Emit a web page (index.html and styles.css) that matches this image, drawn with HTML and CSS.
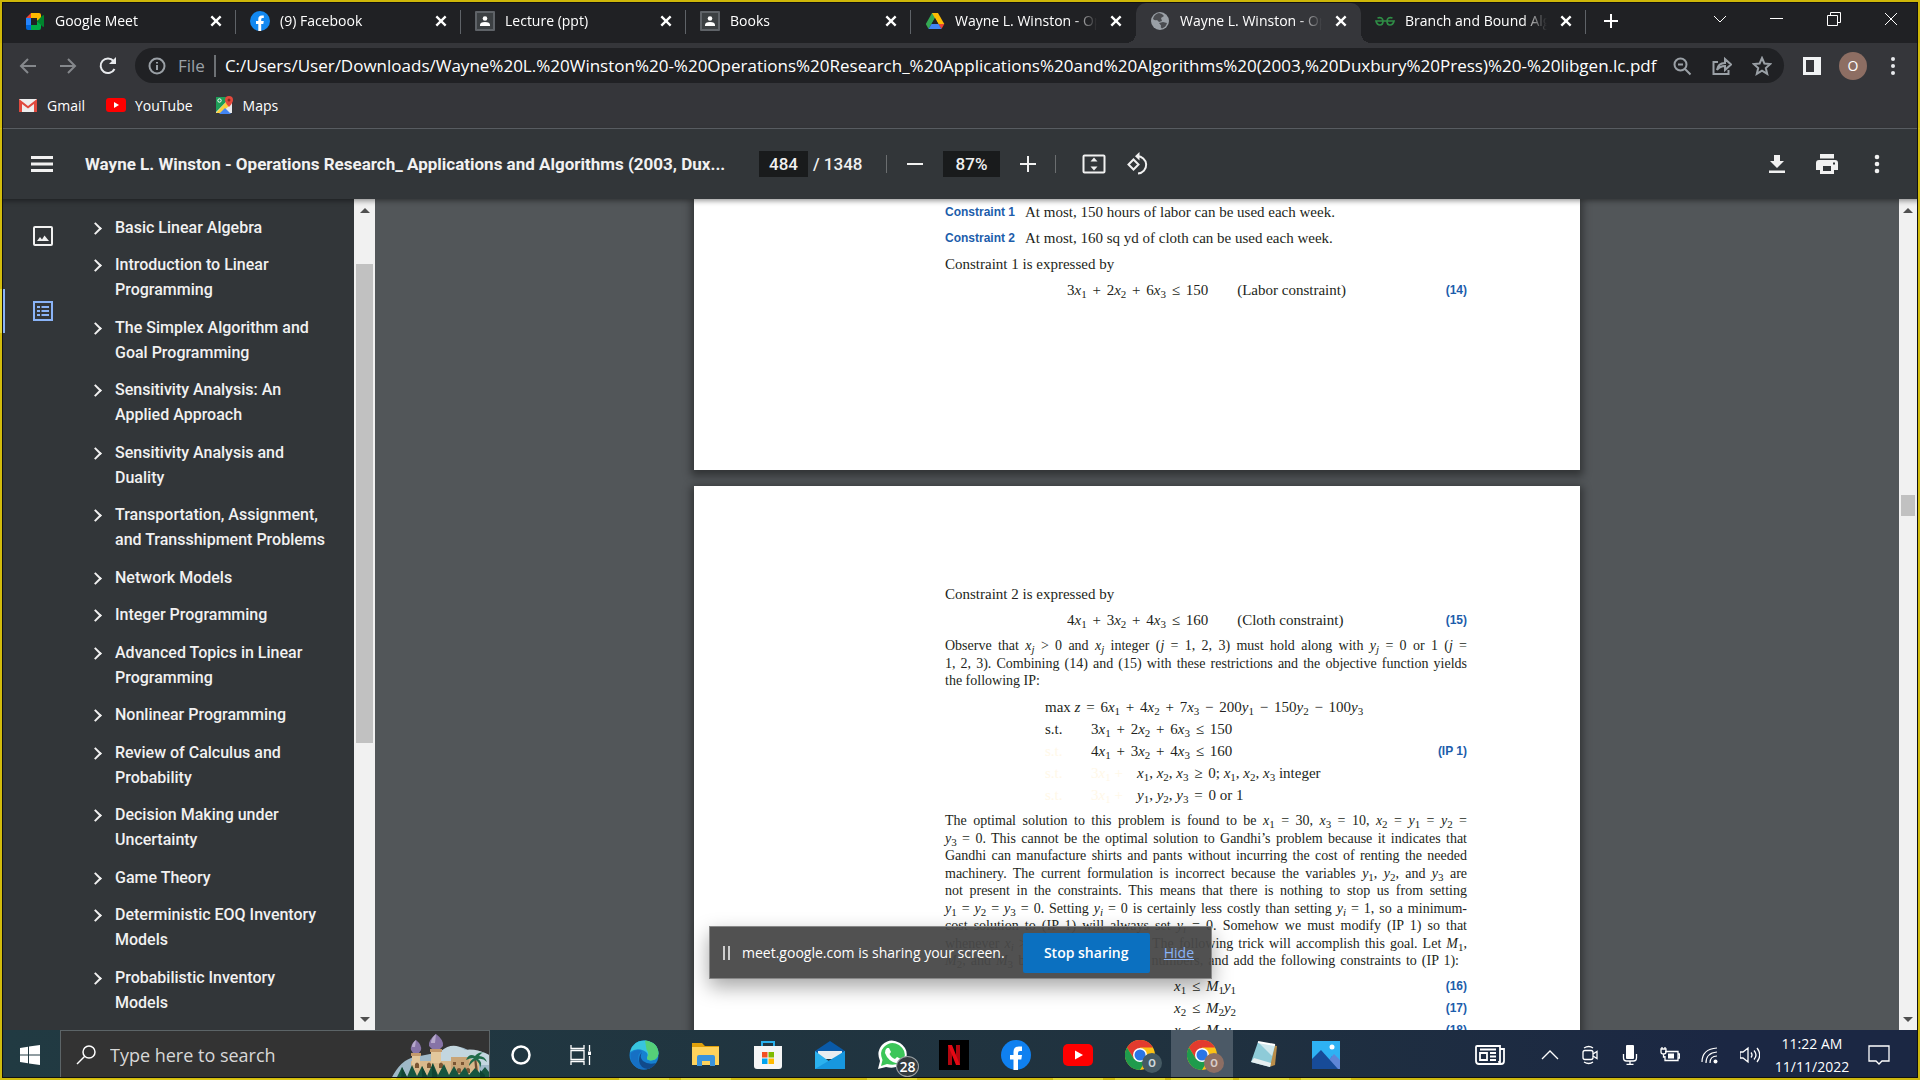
FILE: index.html
```html
<!DOCTYPE html>
<html lang="en">
<head>
<meta charset="utf-8">
<title>Wayne L. Winston - Operations Research</title>
<link rel="stylesheet" href="styles.css">
</head>
<body>
<div class="screen">

<header class="browser">
  <div class="tabstrip">
    <div class="tab">
      <svg class="favicon" viewBox="0 0 20 20"><path d="M1 7l5-5v5z" fill="#ea4335"/><path d="M1 7h5v7H1z" fill="#2684fc"/><path d="M1 14h5v5H3q-2 0-2-2z" fill="#0066da"/><path d="M6 2h8q2 0 2 2v4l-4 2V7H6z" fill="#ffba00"/><path d="M6 19h8q2 0 2-2v-4l-4-3v4H6z" fill="#00ac47"/><path d="M12 10l5-5q2-2 2 0v10q0 2-2 0z" fill="#00832d"/></svg>
      <span class="tab-title">Google Meet</span>
      <button class="tab-close" aria-label="Close tab"><svg viewBox="0 0 12 12"><path d="M2 2l8 8M10 2l-8 8"/></svg></button>
    </div>
    <div class="tab">
      <svg class="favicon" viewBox="0 0 20 20"><circle cx="10" cy="10" r="10" fill="#1288f0"/><path d="M8.300 20v-7H6v-3h2.300V8q0-3.600 3.600-3.600h1.900v2.700h-1.200q-1.400 0-1.400 1.300V10h2.600l-.5 3h-2.100v7z" fill="#fff"/></svg>
      <span class="tab-title">(9) Facebook</span>
      <button class="tab-close" aria-label="Close tab"><svg viewBox="0 0 12 12"><path d="M2 2l8 8M10 2l-8 8"/></svg></button>
    </div>
    <div class="tab">
      <svg class="favicon" viewBox="0 0 20 20"><rect width="20" height="20" rx="1" fill="#5f6368"/><rect x="2" y="2" width="16" height="16" fill="#3c4043"/><circle cx="10" cy="7.500" r="2.300" fill="#fff"/><path d="M5 14q0-3 5-3t5 3v1H5z" fill="#fff"/></svg>
      <span class="tab-title">Lecture (ppt)</span>
      <button class="tab-close" aria-label="Close tab"><svg viewBox="0 0 12 12"><path d="M2 2l8 8M10 2l-8 8"/></svg></button>
    </div>
    <div class="tab">
      <svg class="favicon" viewBox="0 0 20 20"><rect width="20" height="20" rx="1" fill="#5f6368"/><rect x="2" y="2" width="16" height="16" fill="#3c4043"/><circle cx="10" cy="7.500" r="2.300" fill="#fff"/><path d="M5 14q0-3 5-3t5 3v1H5z" fill="#fff"/></svg>
      <span class="tab-title">Books</span>
      <button class="tab-close" aria-label="Close tab"><svg viewBox="0 0 12 12"><path d="M2 2l8 8M10 2l-8 8"/></svg></button>
    </div>
    <div class="tab before-active">
      <svg class="favicon" viewBox="0 0 20 20"><path d="M7 2h6L6.500 13 3.500 18 .8 13z" fill="#34a853"/><path d="M7 2h6l6.300 11h-6z" fill="#fbbc04"/><path d="M13.300 13h6l-2.800 5z" fill="#ea4335"/><path d="M6.500 13h7l3 5h-13z" fill="#4285f4"/><path d="M10 7l3.400 6H6.600z" fill="#202124"/></svg>
      <span class="tab-title">Wayne L. Winston - Op</span>
      <button class="tab-close" aria-label="Close tab"><svg viewBox="0 0 12 12"><path d="M2 2l8 8M10 2l-8 8"/></svg></button>
    </div>
    <div class="tab active">
      <svg class="favicon" viewBox="0 0 20 20"><circle cx="10" cy="10" r="9" fill="#9aa0a6"/><path d="M9 2q-5 1-6 6 2 2 4 1l2 2 3-1-1-3 3-2-2-2zM9 12l4-1 4 1q-1 4-5 5.500-2-1-1-3z" fill="#4a4c50"/></svg>
      <span class="tab-title">Wayne L. Winston - Op</span>
      <button class="tab-close" aria-label="Close tab"><svg viewBox="0 0 12 12"><path d="M2 2l8 8M10 2l-8 8"/></svg></button>
    </div>
    <div class="tab">
      <svg class="favicon" viewBox="0 0 20 20"><g fill="none" stroke="#2f8d46" stroke-width="1.700"><path d="M2.500 7q5-1.500 5.500 3 0 4-3 4T1 10h18q-1 4-4 4t-3-4q.5-4.500 5.500-3"/></g></svg>
      <span class="tab-title">Branch and Bound Alg</span>
      <button class="tab-close" aria-label="Close tab"><svg viewBox="0 0 12 12"><path d="M2 2l8 8M10 2l-8 8"/></svg></button>
    </div>
    <button class="new-tab" aria-label="New tab"><svg viewBox="0 0 16 16"><path d="M8 1v14M1 8h14"/></svg></button>
    <div class="window-controls">
      <button aria-label="Search tabs"><svg viewBox="0 0 14 14"><path d="M1 4l6 6 6-6"/></svg></button>
      <button aria-label="Minimize"><svg viewBox="0 0 14 14"><path d="M0 6.500h13"/></svg></button>
      <button aria-label="Restore"><svg viewBox="0 0 14 14"><path d="M.5 3.500h10v10H.5zM3.500 3V.5h10v10H11"/></svg></button>
      <button aria-label="Close"><svg viewBox="0 0 14 14"><path d="M1 1l12 12M13 1L1 13"/></svg></button>
    </div>
  </div>

  <div class="toolbar">
    <div class="nav">
      <button class="dim" aria-label="Back"><svg viewBox="0 0 20 20"><path d="M18 10H3M10 3l-7 7 7 7"/></svg></button>
      <button class="dim" aria-label="Forward"><svg viewBox="0 0 20 20"><path d="M2 10h15M10 3l7 7-7 7"/></svg></button>
      <button aria-label="Reload"><svg viewBox="0 0 20 20"><path d="M16.500 13A7.300 7.300 0 1 1 15.500 5"/><path d="M18 1v7h-7z" fill="#e8eaed" stroke="none"/></svg></button>
    </div>
    <div class="omnibox">
      <svg class="ico20 grey" viewBox="0 0 20 20"><circle cx="10" cy="10" r="7.500"/><path d="M10 9v5M10 6v1.500"/></svg>
      <span class="scheme">File</span>
      <input class="url" aria-label="Address" value="C:/Users/User/Downloads/Wayne%20L.%20Winston%20-%20Operations%20Research_%20Applications%20and%20Algorithms%20(2003,%20Duxbury%20Press)%20-%20libgen.lc.pdf">
      <button aria-label="Zoom"><svg class="ico20 grey" viewBox="0 0 20 20"><circle cx="8.500" cy="8.500" r="6"/><path d="M13 13l5.500 5.500M6 8.500h5"/></svg></button>
      <button aria-label="Share"><svg class="ico20 grey" viewBox="0 0 20 20"><path d="M6 6H1.500v12h15v-4M5 14q1-7 8-7V3l6 5.500-6 5.500v-4q-5 0-8 4z"/></svg></button>
      <button aria-label="Bookmark"><svg class="ico20 grey" viewBox="0 0 20 20"><path d="M10 2l2.400 5.500 5.900.5-4.500 4 1.400 5.800L10 14.700l-5.200 3.100L6.200 12 1.700 8l5.900-.5z"/></svg></button>
    </div>
    <div class="actions">
      <button class="panel" aria-label="Side panel"><svg viewBox="0 0 20 20"><path d="M1 1h18v18H1z" fill="#f1f3f4"/><path d="M4 4h8v12H4z" fill="#35363a"/></svg></button>
      <button class="avatar">O</button>
      <button class="more" aria-label="Menu"><svg viewBox="0 0 20 20"><g fill="#e8eaed"><circle cx="10" cy="3" r="2"/><circle cx="10" cy="10" r="2"/><circle cx="10" cy="17" r="2"/></g></svg></button>
    </div>
  </div>

  <nav class="bookmarks">
    <a href="#"><svg viewBox="0 0 20 20"><path d="M1 4h18v13H1z" fill="#eee"/><path d="M1 17V4l9 7 9-7v13h-3V9l-6 4.500L4 9v8z" fill="#e04a3f"/></svg>Gmail</a>
    <a href="#"><svg viewBox="0 0 20 20"><rect y="3" width="20" height="14" rx="3" fill="#f00"/><path d="M8 7l5 3-5 3z" fill="#fff"/></svg>YouTube</a>
    <a href="#"><svg viewBox="0 0 20 20"><path d="M2 2h16v16H2z" fill="#e8eaed"/><path d="M2 2h10v5l-5 5-5 5z" fill="#1e9e57"/><path d="M2 18L12 7l3 4-8 7z" fill="#fbcf3b"/><path d="M5 19l6-6 6 6z" fill="#4285f4"/><path d="M15 1a4 4 0 0 1 4 4c0 3-4 7-4 7s-4-4-4-7a4 4 0 0 1 4-4z" fill="#e4493c"/><circle cx="15" cy="5" r="1.500" fill="#8e2a20"/><circle cx="5.500" cy="5.500" r="1.700" fill="none" stroke="#fff"/></svg>Maps</a>
  </nav>
</header>

<section class="pdfbar">
  <button class="menu" aria-label="Menu"><svg viewBox="0 0 22 16"><path d="M0 1.500h22M0 8h22M0 14.500h22"/></svg></button>
  <h1 class="doc-title">Wayne L. Winston - Operations Research_ Applications and Algorithms (2003, Dux...</h1>
  <input class="field page-no" aria-label="Page number" value="484">
  <span class="page-count">/ 1348</span>
  <span class="rule"></span>
  <button aria-label="Zoom out"><svg viewBox="0 0 24 24"><path d="M4 12h16"/></svg></button>
  <input class="field zoom" aria-label="Zoom level" value="87%">
  <button aria-label="Zoom in"><svg viewBox="0 0 24 24"><path d="M4 12h16M12 4v16"/></svg></button>
  <span class="rule"></span>
  <button class="fit" aria-label="Fit to page"><svg viewBox="0 0 24 24"><rect x="1.500" y="3.500" width="21" height="17" rx="1"/><path d="M12 5.500l3.500 4h-7zM12 18.500l3.500-4h-7z" fill="#f1f1f1" stroke="none"/></svg></button>
  <button class="rotate" aria-label="Rotate"><svg viewBox="0 0 24 24"><path d="M7.500 7.500l5 5-5 5-5-5zM11 4.200a8.600 8.600 0 1 1 1 17.300"/><path d="M13.500 0v8.500L9 4.200z" fill="#f1f1f1" stroke="none"/></svg></button>
  <div class="pdf-actions">
    <button aria-label="Download"><svg viewBox="0 0 24 24"><path d="M9 3h6v6h4l-7 7-7-7h4zM4 18.500h16v2.500H4z" fill="#f1f1f1" stroke="none"/></svg></button>
    <button aria-label="Print"><svg viewBox="0 0 24 24"><path d="M5 2h14v4.500H5zM4 8h16q3 0 3 3v7h-4v4H5v-4H1v-7q0-3 3-3zM8 14v5h8v-5zM18 10.500v2h2v-2z" fill="#f1f1f1" fill-rule="evenodd" stroke="none"/></svg></button>
    <button aria-label="More"><svg viewBox="0 0 24 24"><g fill="#f1f1f1" stroke="none"><circle cx="12" cy="5" r="2.300"/><circle cx="12" cy="12" r="2.300"/><circle cx="12" cy="19" r="2.300"/></g></svg></button>
  </div>
</section>

<main class="workspace">
  <aside class="sidebar">
    <div class="rail">
      <button aria-label="Thumbnails"><svg viewBox="0 0 20 20"><rect x="1" y="1" width="18" height="18" rx="1"/><path d="M4 15l3-4 2 2.500 2.500-4L16 15z" fill="#f1f1f1" stroke="none"/></svg></button>
      <button class="on" aria-label="Outline"><svg viewBox="0 0 20 20"><rect x="1" y="1" width="18" height="18"/><path d="M4 6h3M4 10h3M4 14h3M8.500 6H16M8.500 10H16M8.500 14H16"/></svg></button>
    </div>
    <ul class="outline">
      <li><a href="#">Basic Linear Algebra</a></li>
      <li><a href="#">Introduction to Linear<br>Programming</a></li>
      <li><a href="#">The Simplex Algorithm and<br>Goal Programming</a></li>
      <li><a href="#">Sensitivity Analysis: An<br>Applied Approach</a></li>
      <li><a href="#">Sensitivity Analysis and<br>Duality</a></li>
      <li><a href="#">Transportation, Assignment,<br>and Transshipment Problems</a></li>
      <li><a href="#">Network Models</a></li>
      <li><a href="#">Integer Programming</a></li>
      <li><a href="#">Advanced Topics in Linear<br>Programming</a></li>
      <li><a href="#">Nonlinear Programming</a></li>
      <li><a href="#">Review of Calculus and<br>Probability</a></li>
      <li><a href="#">Decision Making under<br>Uncertainty</a></li>
      <li><a href="#">Game Theory</a></li>
      <li><a href="#">Deterministic EOQ Inventory<br>Models</a></li>
      <li><a href="#">Probabilistic Inventory<br>Models</a></li>
    </ul>
    <div class="scrollbar side"><i class="up"></i><i class="thumb"></i><i class="down"></i></div>
  </aside>

  <div class="viewer">
    <article class="page first">
      <p class="eq"><b class="label">Constraint 1</b>At most, 150 hours of labor can be used each week.</p>
      <p class="eq"><b class="label">Constraint 2</b>At most, 160 sq yd of cloth can be used each week.</p>
      <p>Constraint 1 is expressed by</p>
      <p class="eq main-eq"><span>3<i>x</i><sub>1</sub> <span class="op">+</span> 2<i>x</i><sub>2</sub> <span class="op">+</span> 6<i>x</i><sub>3</sub> <span class="op">≤</span> 150</span><span>(Labor constraint)</span><b class="num">(14)</b></p>
    </article>
    <article class="page second">
      <p>Constraint 2 is expressed by</p>
      <p class="eq main-eq"><span>4<i>x</i><sub>1</sub> <span class="op">+</span> 3<i>x</i><sub>2</sub> <span class="op">+</span> 4<i>x</i><sub>3</sub> <span class="op">≤</span> 160</span><span>(Cloth constraint)</span><b class="num">(15)</b></p>
      <p class="para">
        <span>Observe that <i>x<sub>j</sub></i> &gt; 0 and <i>x<sub>j</sub></i> integer (<i>j</i> = 1, 2, 3) must hold along with <i>y<sub>j</sub></i> = 0 or 1 (<i>j</i> =</span>
        <span>1, 2, 3). Combining (14) and (15) with these restrictions and the objective function yields</span>
        <span class="last">the following IP:</span>
      </p>
      <div class="system">
        <p class="eq"><span>max <i>z</i> <span class="op">=</span> 6<i>x</i><sub>1</sub> <span class="op">+</span> 4<i>x</i><sub>2</sub> <span class="op">+</span> 7<i>x</i><sub>3</sub> <span class="op">−</span> 200<i>y</i><sub>1</sub> <span class="op">−</span> 150<i>y</i><sub>2</sub> <span class="op">−</span> 100<i>y</i><sub>3</sub></span></p>
        <p class="eq"><span class="st">s.t.</span><span>3<i>x</i><sub>1</sub> <span class="op">+</span> 2<i>x</i><sub>2</sub> <span class="op">+</span> 6<i>x</i><sub>3</sub> <span class="op">≤</span> 150</span></p>
        <p class="eq"><span class="st ghost">s.t.</span><span>4<i>x</i><sub>1</sub> <span class="op">+</span> 3<i>x</i><sub>2</sub> <span class="op">+</span> 4<i>x</i><sub>3</sub> <span class="op">≤</span> 160</span><b class="num">(IP 1)</b></p>
        <p class="eq"><span class="st ghost">s.t.</span><span class="lead ghost">3<i>x</i><sub>1</sub> +</span><span><i>x</i><sub>1</sub>, <i>x</i><sub>2</sub>, <i>x</i><sub>3</sub> <span class="op">≥</span> 0; <i>x</i><sub>1</sub>, <i>x</i><sub>2</sub>, <i>x</i><sub>3</sub> integer</span></p>
        <p class="eq"><span class="st ghost">s.t.</span><span class="lead ghost">3<i>x</i><sub>1</sub> +</span><span><i>y</i><sub>1</sub>, <i>y</i><sub>2</sub>, <i>y</i><sub>3</sub> <span class="op">=</span> 0 or 1</span></p>
      </div>
      <p class="para">
        <span>The optimal solution to this problem is found to be <i>x</i><sub>1</sub> = 30, <i>x</i><sub>3</sub> = 10, <i>x</i><sub>2</sub> = <i>y</i><sub>1</sub> = <i>y</i><sub>2</sub> =</span>
        <span><i>y</i><sub>3</sub> = 0. This cannot be the optimal solution to Gandhi’s problem because it indicates that</span>
        <span>Gandhi can manufacture shirts and pants without incurring the cost of renting the needed</span>
        <span>machinery. The current formulation is incorrect because the variables <i>y</i><sub>1</sub>, <i>y</i><sub>2</sub>, and <i>y</i><sub>3</sub> are</span>
        <span>not present in the constraints. This means that there is nothing to stop us from setting</span>
        <span><i>y</i><sub>1</sub> = <i>y</i><sub>2</sub> = <i>y</i><sub>3</sub> = 0. Setting <i>y<sub>i</sub></i> = 0 is certainly less costly than setting <i>y<sub>i</sub></i> = 1, so a minimum-</span>
        <span>cost solution to (IP 1) will always set <i>y<sub>i</sub></i> = 0. Somehow we must modify (IP 1) so that</span>
        <span>whenever <i>x<sub>i</sub></i> &gt; 0, <i>y<sub>i</sub></i> = 1 must hold. The following trick will accomplish this goal. Let <i>M</i><sub>1</sub>,</span>
        <span class="short"><i>M</i><sub>2</sub>, and <i>M</i><sub>3</sub> be three large positive numbers, and add the following constraints to (IP 1):</span>
      </p>
      <div class="bounds">
        <p class="eq"><span><i>x</i><sub>1</sub> <span class="op">≤</span> <i>M</i><sub>1</sub><i>y</i><sub>1</sub></span><b class="num">(16)</b></p>
        <p class="eq"><span><i>x</i><sub>2</sub> <span class="op">≤</span> <i>M</i><sub>2</sub><i>y</i><sub>2</sub></span><b class="num">(17)</b></p>
        <p class="eq"><span><i>x</i><sub>3</sub> <span class="op">≤</span> <i>M</i><sub>3</sub><i>y</i><sub>3</sub></span><b class="num">(18)</b></p>
      </div>
    </article>
  </div>
  <div class="scrollbar doc"><i class="up"></i><i class="thumb"></i><i class="down"></i></div>
</main>

<footer class="taskbar">
  <button class="start" aria-label="Start"><svg viewBox="0 0 20 20"><path d="M0 3l8-1.200V9.500H0zM9 1.600L20 0v9.500H9zM0 10.500h8v7.700L0 17zM9 10.500h11V20L9 18.400z" fill="#fff"/></svg></button>
  <label class="search">
    <svg class="glass" viewBox="0 0 20 20"><circle cx="13" cy="7" r="6"/><path d="M8.500 11.500L1 19"/></svg>
    <input type="text" aria-label="Search" placeholder="Type here to search">
    <svg class="castle" viewBox="0 0 98 46">
      <path d="M0 46q10-20 24-22l30-6q14-8 24 0 10-2 20 4v24z" fill="#9fb9c8"/>
      <path d="M50 18q12-10 24-1 10-2 24 5v10H50z" fill="#c3d6df"/>
      <path d="M20 28h40v-4h18l4 4h6v16H20z" fill="#d9b98c"/><path d="M60 24h18v18H60z" fill="#c9a577"/>
      <path d="M21 20h8v12h-8zM40 16h10v14H40z" fill="#e3c79c"/><path d="M20 20h10v3H20zM39 16h12v3H39z" fill="#c49a6c"/>
      <path d="M25 7q-6 5-5 10l2 3h6l2-3q1-5-5-10zM45 1q-8 6-7 12l3 3h8l3-3q1-6-7-12z" fill="#8673a6"/>
      <path d="M25 7q-4 3-4 7h3zM45 1q-5 4-5 9h4z" fill="#b7a9cc"/>
      <path d="M24 35v-4q2-3 4 0v4zM36 35v-4q2-3 4 0v4zM48 35v-4q2-3 4 0v4zM62 32v-3h3v3zM70 32v-3h3v3zM66 40v-4q2-2 4 0v4zM75 40v-4q2-2 4 0v4z" fill="#7a5634"/>
      <path d="M83 24l2 22h3l-3-22z" fill="#6b4b32"/>
      <path d="M84 23q-6-3-9 4 4-2 8-2-5 3-5 8 4-5 7-6 4 3 4 8 3-6-2-9 5-1 9 3-2-6-8-6 3-4 5-3-5-2-9 3z" fill="#1f6b4a"/>
      <path d="M5 46l6-12 5 10 5-12 5 11 5-10 5 10 6-13 5 12 6-11 5 11 5-9 5 9 6-8 4 8 6-7 5 5 5-6 4 5v8z" fill="#17553f"/>
      <path d="M11 34l5 10v2h-6zM41 30l5 12v4h-5zM31 33l5 10v3h-5zM89 37l5 5v4h-5z" fill="#0f4433"/>
    </svg>
  </label>
  <div class="apps">
    <button class="app" aria-label="Cortana"><svg viewBox="0 0 30 30"><circle cx="15" cy="15" r="8.500" fill="none" stroke="#fff" stroke-width="2.500"/></svg></button>
    <button class="app" aria-label="Task view"><svg viewBox="0 0 30 30"><path d="M4 5v3.500h13V5M4 25v-3.500h13V25M4 10.500h13v9H4zM22.500 5v6M22.500 16v9" fill="none" stroke="#fff" stroke-width="1.300"/><path d="M21 11.500h3v3.500h-3z" fill="#fff"/></svg></button>
    <button class="app run" aria-label="Edge"><svg viewBox="0 0 30 30"><circle cx="15" cy="15" r="14.500" fill="#1681d0"/><path d="M1 12Q4 0 16 .500q13 1.500 13.500 13-1 7-8 7-5-.5-3-4 1-4-4-6-7-3-13.500 1.500z" fill="#38c5df"/><path d="M16 .5q13 1.500 13.500 13-1 7-8 7-5-.5-3-4 2-3-1-7z" fill="#55cf78"/><path d="M13 11q-6 4-3 11 4 7 11 6-6 3-13 0-8-6-6-15 6-5 11-2z" fill="#1670c4"/><path d="M13 12q-3 5 1 9 5 4 13 2-3 5-8 6-8-1-9-8 0-6 3-9z" fill="#114a8b"/></svg></button>
    <button class="app run" aria-label="File Explorer"><svg viewBox="0 0 30 30"><path d="M1 3h10l3 3h14v6H1z" fill="#e0a00a"/><path d="M1 7h27v18H1z" fill="#ffd35c"/><path d="M6 26V17q0-2 2-2h14q2 0 2 2v9h-5v-5h-8v5z" fill="#3a93dc"/></svg></button>
    <button class="app" aria-label="Store"><svg viewBox="0 0 30 30"><path d="M9 8V2h12v6" fill="none" stroke="#29b0ec" stroke-width="2"/><path d="M1 6h28v20q0 3-3 3H4q-3 0-3-3z" fill="#f5f5f5"/><path d="M9 12h5.500v5.500H9z" fill="#f25022"/><path d="M15.500 12H21v5.500h-5.500z" fill="#7fba00"/><path d="M9 18.500h5.500V24H9z" fill="#00a4ef"/><path d="M15.500 18.500H21V24h-5.500z" fill="#ffb900"/></svg></button>
    <button class="app" aria-label="Mail"><svg viewBox="0 0 30 30"><path d="M0 11L15 1l15 10v5H0z" fill="#0a5aa8"/><path d="M3 11h24v8H3z" fill="#e9ecf0"/><path d="M0 11l15 11L30 11v18H0z" fill="#2bb1ee"/><path d="M0 29l30-18v18z" fill="#1797df"/></svg></button>
    <button class="app run" aria-label="WhatsApp, 28 unread"><svg viewBox="0 0 30 30"><path d="M1 29l2-8Q-1 12 5 5q8-8 18-2 9 6 6 16-6 11-20 8z" fill="#fff"/><path d="M4 26l1.500-6Q2 12 7 7q7-7 15-2 8 6 5 13-5 9-17 6z" fill="#3cc659"/><path d="M10 8l2 0 2 4-1.500 2q2 4 5.500 5l2-2 4 2q-1 4-5 4Q11 21 8 13q-.5-3 2-5z" fill="#fff"/></svg><span class="count">28</span></button>
    <button class="app" aria-label="Netflix"><svg viewBox="0 0 30 30"><path d="M0 0h30v30H0z" fill="#000"/><path d="M9 5h4v20H9zM17 5h4v20h-4z" fill="#b1060f"/><path d="M9 5h4l8 20h-4z" fill="#e50914"/></svg></button>
    <button class="app" aria-label="Facebook"><svg viewBox="0 0 30 30"><circle cx="15" cy="15" r="15" fill="#0f80f0"/><path d="M12.500 30V19.500H9V15h3.500v-3q0-5.500 5.500-5.500h3V11h-2q-2 0-2 2v2h4l-.7 4.500H17V30z" fill="#fff"/></svg></button>
    <button class="app run" aria-label="YouTube"><svg viewBox="0 0 30 30"><rect y="4" width="30" height="22" rx="5" fill="#f00"/><path d="M12 10.500l8 4.500-8 4.500z" fill="#fff"/></svg></button>
    <button class="app run" aria-label="Chrome"><svg viewBox="0 0 30 30"><circle cx="15" cy="15" r="15" fill="#fbc116"/><path d="M2 7.500A15 15 0 0 1 28 7.500H15L9 19z" fill="#e33b2e"/><path d="M2 7.500A15 15 0 0 0 15 30l6.500-11L9 19z" fill="#1f9b4c"/><circle cx="15" cy="15" r="7" fill="#fff"/><circle cx="15" cy="15" r="5.500" fill="#2a75e6"/></svg><span class="profile slate">O</span></button>
    <button class="app run current" aria-label="Chrome"><svg viewBox="0 0 30 30"><circle cx="15" cy="15" r="15" fill="#fbc116"/><path d="M2 7.500A15 15 0 0 1 28 7.500H15L9 19z" fill="#e33b2e"/><path d="M2 7.500A15 15 0 0 0 15 30l6.500-11L9 19z" fill="#1f9b4c"/><circle cx="15" cy="15" r="7" fill="#fff"/><circle cx="15" cy="15" r="5.500" fill="#2a75e6"/></svg><span class="profile">O</span></button>
    <button class="app run" aria-label="Notepad"><svg viewBox="0 0 30 30"><path d="M11 3l17 3-2 19-6 2z" fill="#b98d4a"/><path d="M9 2l17 3-5 22L2 22z" fill="#8ecbd8"/><path d="M9 2l17 3-3 11z" fill="#cfe8ee"/><path d="M2 22l19 5 1-4-17-5z" fill="#e6eef0"/><path d="M9 2l17 3" stroke="#fff" stroke-width="2"/></svg></button>
    <button class="app run" aria-label="Photos"><svg viewBox="0 0 30 30"><path d="M1 1h28v28H1z" fill="#2eb2f4"/><path d="M12 29l9-13 8 8v5z" fill="#2b73d3"/><path d="M18 20l5-6 6 6v9H18z" fill="#5f86d8"/><path d="M1 19L10 10l17 19H1z" fill="#174b98"/><circle cx="21" cy="7" r="2.500" fill="#fff"/></svg></button>
  </div>
  <div class="tray">
    <svg class="news" viewBox="0 0 30 20"><path d="M2 1h23v18H4q-3 0-3-3V2q0-1 1-1zM25 4h4v12q0 3-3 3-2 0-2-3M5 8h7v7H5zM5 4.500h16M15 8h6M15 11.500h6M15 15h6" stroke-width="1.800"/></svg>
    <svg class="caret" viewBox="0 0 20 20"><path d="M2 14l8-8 8 8"/></svg>
    <svg viewBox="0 0 20 20"><rect x="3" y="5.500" width="10" height="9" rx="2"/><path d="M13 9l4-2.500v7L13 11M4 3q5-3 9 0M4 17q5 3 9 0"/></svg>
    <svg viewBox="0 0 20 20"><rect x="6" y="0" width="8" height="14" rx="1" fill="#fff" stroke="none"/><path d="M3.500 9v4q0 3 3 3h7q3 0 3-3V9M10 16v3M6.500 19.300h7"/></svg>
    <svg viewBox="0 0 20 20"><path d="M5 6.500h13v9H5V11M18 9h1.500v4H18M1 4h5v3q0 2-2.500 2T1 7zM2 4V2M5 4V2M3.500 9v3H5"/><path d="M8 8.500h6v5H8z" fill="#fff" stroke="none"/></svg>
    <svg viewBox="0 0 20 20"><g stroke-width="1.200"><path d="M2 17Q2 4 17 3M6 18Q6 8 17 7M10 18q0-7 7-7"/></g><circle cx="15.500" cy="16.500" r="2" fill="#fff" stroke="none"/></svg>
    <svg viewBox="0 0 20 20"><path d="M0 7h3l5-4v14l-5-4H0zM11 7.500q2 2.500 0 5M14 5.500q4 4.500 0 9M17 3q5.500 7 0 14"/></svg>
    <div class="clock"><time>11:22 AM</time><time>11/11/2022</time></div>
    <svg class="note" viewBox="0 0 22 22"><path d="M1 2h20v15h-7l-3 3-3-3H1z"/></svg>
  </div>
</footer>

<div class="share-bar" role="dialog" aria-label="Screen sharing">
  <i class="grip"></i>
  <span>meet.google.com is sharing your screen.</span>
  <button class="stop">Stop sharing</button>
  <a href="#">Hide</a>
</div>
<div class="capture-frame"></div>
</div>
</body>
</html>
```
FILE: styles.css
```css
* { box-sizing: border-box; }
body { margin: 0; font-family: "Open Sans", "Noto Sans", sans-serif; font-size: 14px; color: #fff; background: #202124; }
button { display: flex; align-items: center; justify-content: center; flex: none; padding: 0; border: 0; background: none; color: inherit; font: inherit; }
input { border: 0; padding: 0; color: inherit; font: inherit; min-width: 0; }
a { color: inherit; text-decoration: none; }
p { margin: 0; }
svg { display: block; }

.screen { position: relative; display: flex; flex-direction: column; height: 100vh; overflow: hidden; }
.capture-frame { position: absolute; inset: 0; z-index: 10; border: 2px solid rgba(255, 226, 0, .78); box-shadow: inset 0 0 0 1px #111; pointer-events: none; }

/* browser chrome */
.browser { flex: none; background: #35363a; border-bottom: 1px solid #5f6368; }
.tabstrip { display: flex; height: 43px; padding: 3px 1px 0 11px; background: #202124; }
.tab { position: relative; display: flex; align-items: center; flex: 0 1 225px; min-width: 0; padding: 0 13px 4px 14px; }
.tab::after { content: ""; position: absolute; right: 0; top: 7px; height: 24px; width: 1px; background: #5f6368; }
.tab.before-active::after { display: none; }
.favicon { width: 20px; height: 20px; flex: none; }
.tab-title { flex: 1; min-width: 0; margin-left: 10px; overflow: hidden; white-space: nowrap; line-height: 20px; -webkit-mask-image: linear-gradient(90deg, #000 118px, transparent 142px); mask-image: linear-gradient(90deg, #000 118px, transparent 142px); }
.tab-close { width: 14px; height: 14px; margin-left: 8px; }
.tab-close svg { width: 14px; height: 14px; fill: none; stroke: #fff; stroke-width: 2; }
.tab.active { background: #35363a; border-radius: 10px 10px 0 0; }
.tab.active::before, .tab.active::after { content: ""; position: absolute; top: auto; bottom: 0; width: 10px; height: 10px; }
.tab.active::before { left: -10px; background: radial-gradient(circle at 0 0, #202124 10px, #35363a 10px); }
.tab.active::after { right: -10px; background: radial-gradient(circle at 100% 0, #202124 10px, #35363a 10px); }
.new-tab { width: 50px; height: 36px; }
.new-tab svg { width: 16px; height: 16px; fill: none; stroke: #fff; stroke-width: 2; }
.window-controls { display: flex; margin-left: auto; }
.window-controls button { width: 57px; height: 32px; }
.window-controls svg { width: 14px; height: 14px; fill: none; stroke: #fff; stroke-width: 1; }

.toolbar { display: flex; align-items: center; height: 45px; padding: 0 9px 0 8px; }
.nav { display: flex; }
.nav button { width: 40px; height: 40px; }
.nav svg { width: 20px; height: 20px; fill: none; stroke: #e8eaed; stroke-width: 2; }
.nav .dim svg { stroke: #85888c; }
.omnibox { display: flex; align-items: center; flex: 1; min-width: 0; height: 35px; margin-left: 7px; padding: 0 12px; border-radius: 18px; background: #202124; font-size: 17px; }
.ico20 { width: 20px; height: 20px; fill: none; stroke: #9aa0a6; stroke-width: 2; }
.scheme { margin: 0 9px 0 11px; padding-right: 9px; border-right: 2px solid #6d7175; color: #9aa0a6; line-height: 22px; }
.url { flex: 1; background: none; outline: 0; }
.omnibox button { width: 40px; height: 34px; }
.omnibox button:nth-of-type(1) { width: 30px; padding-right: 0; margin-right: 5px; }
.omnibox button:last-child { width: 20px; margin-left: 10px; }
.actions { display: flex; align-items: center; }
.actions svg { width: 20px; height: 20px; }
.actions .panel { width: 20px; height: 34px; margin: 0 17px 0 18px; }
.actions .avatar { width: 28px; height: 28px; border-radius: 50%; background: #8d6e63; }
.actions .more { width: 20px; height: 34px; margin: 0 8px 0 16px; }
.bookmarks { display: flex; align-items: center; gap: 21px; height: 40px; padding: 0 18px 6px; }
.bookmarks a { display: flex; align-items: center; gap: 9px; }
.bookmarks svg { width: 20px; height: 20px; }

/* pdf toolbar */
.pdfbar { position: relative; z-index: 2; display: flex; align-items: center; flex: none; height: 70px; padding: 0 31px; background: #323639; font-family: Roboto, sans-serif; font-size: 17px; font-weight: 500; color: #f1f1f1; box-shadow: 0 2px 5px rgba(0, 0, 0, .4); }
.pdfbar svg { width: 24px; height: 24px; fill: none; stroke: #f1f1f1; stroke-width: 2; }
.pdfbar .menu svg { width: 22px; height: 16px; stroke-width: 3; }
.doc-title { flex: 0 0 648px; margin: 0 26px 0 32px; font-size: 17px; font-weight: 700; white-space: nowrap; }
.field { height: 26px; background: #191b1c; text-align: center; }
.page-no { width: 49px; }
.page-count { width: 48px; margin: 0 25px 0 5px; white-space: nowrap; }
.zoom { width: 57px; margin: 0 16px; }
.rule { width: 1px; height: 18px; background: #6b6e70; }
.pdfbar .rule + button { margin-left: 16px; }
.pdfbar .rule + .fit { margin-left: 26px; }
.zoom + button { margin-right: 15px; }
.rotate { margin-left: 20px; }
.pdf-actions { display: flex; gap: 26px; margin-left: auto; }

/* workspace */
.workspace { display: flex; flex: 1; min-height: 0; background: #525659; }
.sidebar { display: flex; flex: none; width: 375px; background: #323639; overflow: hidden; }
.rail { flex: none; width: 85px; padding-top: 12px; }
.rail button { width: 85px; height: 50px; margin-bottom: 28px; }
.rail svg { width: 20px; height: 20px; fill: none; stroke: #f1f1f1; stroke-width: 2; }
.rail .on { height: 44px; border-left: 5px solid #8ab4f8; padding-right: 5px; }
.rail .on svg { stroke: #8ab4f8; }
.outline { flex: 1; margin: 0; padding: 16px 0 0; list-style: none; font: 500 16px/25px Roboto, sans-serif; color: #f1f1f1; white-space: nowrap; }
.outline li { display: flex; margin-bottom: 12px; }
.outline li:nth-child(even) { margin-bottom: 13px; }
.outline li::before { content: ""; flex: none; width: 7px; height: 7px; margin: 9px 15px 0 6px; border: solid #f1f1f1; border-width: 2px 2px 0 0; transform: rotate(45deg); }
.scrollbar { position: relative; display: flex; flex-direction: column; flex: none; width: 21px; padding: 9px 2px 8px; background: #f1f1f1; }
.scrollbar.doc { border-right: 3px solid #323639; }
.scrollbar .thumb { background: #c1c1c1; }
.side .thumb { flex: 0 1 479px; margin: 51px 0 auto; }
.doc .thumb { flex: 0 1 21px; margin: 282px 0 auto; }
.up, .down { flex: none; align-self: center; border: 5px solid transparent; }
.up { border-top: 0; border-bottom-color: #505050; }
.down { border-bottom: 0; border-top-color: #505050; }

/* document */
.viewer { flex: 1; min-width: 0; overflow: hidden; }
.page { display: flex; flex-direction: column; gap: 8px; max-width: 886px; margin: 0 auto 16px; padding: 4px 113px 0 251px; background: #fff; color: #231f20; font: 15px/18px "Liberation Serif", serif; white-space: nowrap; box-shadow: 0 3px 8px 3px rgba(0, 0, 0, .4); }
.page.first { padding-bottom: 171px; }
.page.second { padding-top: 99px; padding-bottom: 60px; margin-bottom: 0; }
.page sub { font-size: 11px; font-style: normal; line-height: 0; vertical-align: -3px; }
.page i sub { font-style: italic; }
.label, .num { color: #1c5dab; font-family: "Liberation Sans Narrow", "Liberation Sans", sans-serif; font-size: 12px; }
.label { flex: none; width: 80px; }
.eq { display: flex; }
.op { margin: 0 2px; }
.num { margin-left: auto; }
.main-eq { padding-left: 122px; gap: 29px; }
.para { font-size: 14px; }
.para span { display: block; height: 18px; text-align: justify; text-align-last: justify; }
.para span:nth-child(even), .para span:nth-child(9) { height: 17px; }
.para .last { text-align-last: left; }
.para .short { padding-right: 8px; }
.system, .bounds { display: flex; flex-direction: column; gap: 4px; }
.system { padding-left: 100px; }
.st, .lead { width: 46px; }
.ghost { color: #fff8e8; }
.bounds { padding-left: 229px; }

/* share notice */
.share-bar { position: absolute; z-index: 5; left: 50%; bottom: 101px; display: flex; align-items: center; height: 53px; width: 503px; margin-left: -251px; padding: 0 17px 0 13px; background: rgba(72, 72, 72, .95); border: 1px solid rgba(160, 160, 160, .7); box-shadow: 0 8px 20px rgba(0, 0, 0, .35); white-space: nowrap; }
.grip { flex: none; width: 7px; height: 14px; border: solid #ccc; border-width: 0 2px; margin-right: 12px; }
.stop { width: 127px; height: 40px; margin-left: auto; border-radius: 2px; background: #0b70c0; font-weight: 600; }
.share-bar a { margin-left: 14px; color: #8ab4f8; text-decoration: underline; }

/* taskbar */
.taskbar { position: relative; z-index: 3; display: flex; flex: none; height: 50px; background: linear-gradient(90deg, #213a42, #20323f 60%, #1b2743 90%); }
.start { width: 60px; }
.start svg { width: 20px; height: 20px; }
.search { display: flex; align-items: center; flex: 0 1 430px; padding-left: 15px; background: #333; border: 1px solid #5c6467; overflow: hidden; }
.glass { width: 20px; height: 20px; flex: none; fill: none; stroke: #fff; stroke-width: 1.5; }
.search input { flex: 1; margin-left: 14px; background: none; font-size: 18px; }
.search input::placeholder { color: #d8d8d8; opacity: 1; }
.castle { width: 98px; height: 46px; align-self: flex-end; flex: none; }
.apps { display: flex; }
.app { position: relative; width: 62px; }
.app:first-child { width: 61px; }
.app > svg { width: 30px; height: 30px; }
.app.run::after { content: ""; position: absolute; left: 6px; right: 6px; bottom: 0; height: 2px; background: #76b9ed; }
.app.current { background: #4b5966; }
.app.current::after { left: 0; right: 0; }
.count, .profile { position: absolute; display: flex; align-items: center; justify-content: center; border-radius: 50%; }
.count { right: 4px; bottom: 3px; width: 23px; height: 21px; background: #333b40; border: 1px solid #9aa0a3; font-size: 14px; font-weight: 600; }
.profile { right: 9px; bottom: 7px; width: 20px; height: 20px; background: #8d6e63; color: #d8ccc8; font: 700 11px Roboto, sans-serif; }
.profile.slate { background: #455a64; color: #cfd8dc; }
.tray { display: flex; align-items: center; margin-left: auto; padding-right: 30px; }
.tray svg { width: 20px; height: 20px; margin-right: 20px; fill: none; stroke: #fff; stroke-width: 1.3; flex: none; }
.tray .news { width: 30px; margin-right: 35px; }
.clock { display: flex; flex-direction: column; align-items: center; width: 80px; margin: 0 16px 0 -8px; font-size: 14px; line-height: 23px; white-space: nowrap; }
.tray .note { width: 22px; height: 22px; margin: 0; }
```
